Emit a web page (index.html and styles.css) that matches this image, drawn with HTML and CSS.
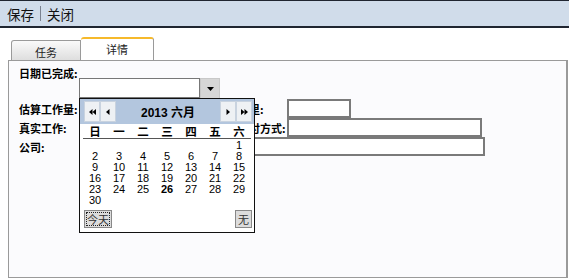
FILE: index.html
```html
<!DOCTYPE html>
<html lang="zh-CN">
<head>
  <meta charset="UTF-8">
  <title>详情</title>
  <link rel="stylesheet" href="styles.css">
</head>
<body>
  <div class="toolbar">
    <span class="tool">保存</span>
    <span class="sep"></span>
    <span class="tool">关闭</span>
  </div>

  <div class="tabs">
    <div class="tab">任务</div>
    <div class="tab active">详情</div>
  </div>

  <div class="panel">
    <div class="label">日期已完成:</div>
    <div class="date-field">
      <div class="date-input"></div>
      <div class="drop-btn">
        <svg width="7" height="4" viewBox="0 0 7 4"><path d="M0 0h7L3.5 4z" fill="#000"/></svg>
      </div>
    </div>

    <div class="form-grid">
      <div class="label">估算工作量:</div>
      <div class="box w-mid"></div>
      <div class="label">公里:</div>
      <div class="box w-small"></div>

      <div class="label">真实工作:</div>
      <div class="box w-mid"></div>
      <div class="label">支付方式:</div>
      <div class="box w-wide"></div>

      <div class="label">公司:</div>
      <div class="box w-full"></div>
    </div>

    <!-- date picker popup -->
    <div class="calendar">
      <div class="cal-head">
        <div class="nav-group">
          <span class="nav-btn"><svg width="7" height="6" viewBox="0 0 7 6"><path d="M3.5 0v6L0 3zM7 0v6L3.5 3z" fill="#000"/></svg></span>
          <span class="nav-btn"><svg width="4" height="6" viewBox="0 0 4 6"><path d="M3.5 0v6L0 3z" fill="#000"/></svg></span>
        </div>
        <div class="cal-title">2013 六月</div>
        <div class="nav-group">
          <span class="nav-btn"><svg width="4" height="6" viewBox="0 0 4 6"><path d="M0.5 0v6L4 3z" fill="#000"/></svg></span>
          <span class="nav-btn"><svg width="7" height="6" viewBox="0 0 7 6"><path d="M0 0v6L3.5 3zM3.5 0v6L7 3z" fill="#000"/></svg></span>
        </div>
      </div>
      <div class="week-row">
        <span>日</span><span>一</span><span>二</span><span>三</span><span>四</span><span>五</span><span>六</span>
      </div>
      <div class="days">
        <span></span><span></span><span></span><span></span><span></span><span></span><span>1</span>
        <span>2</span><span>3</span><span>4</span><span>5</span><span>6</span><span>7</span><span>8</span>
        <span>9</span><span>10</span><span>11</span><span>12</span><span>13</span><span>14</span><span>15</span>
        <span>16</span><span>17</span><span>18</span><span>19</span><span>20</span><span>21</span><span>22</span>
        <span>23</span><span>24</span><span>25</span><span class="today">26</span><span>27</span><span>28</span><span>29</span>
        <span>30</span>
      </div>
      <div class="cal-foot">
        <span class="cal-btn focus">今天</span>
        <span class="cal-btn">无</span>
      </div>
    </div>
  </div>
</body>
</html>
```

FILE: styles.css
```css
body {
    margin: 0;
    font-family: "Liberation Sans", "Noto Sans CJK SC", sans-serif;
    color: #000;
    background-color: #fff;
}

.toolbar {
    height: 25px;
    border-top: 1px solid #1f2530;
    border-bottom: 2px solid #1f2530;
    background-color: #d0dcea;
    display: flex;
    align-items: center;
    padding-left: 7px;
    font-family: "Noto Sans CJK SC", sans-serif;
    font-size: 13.5px;
    color: #111;
}

.sep {
    width: 1px;
    height: 15px;
    background-color: #7a8290;
    margin: 0 6px;
}

.tabs {
    display: flex;
    align-items: flex-end;
    height: 23px;
    margin-top: 9px;
    padding-left: 11px;
}

.tab {
    width: 68px;
    height: 19px;
    border: 1px solid #9a9a9a;
    border-bottom: none;
    border-top-left-radius: 3px;
    background: linear-gradient(#fafafa, #dedede);
    font-family: "Noto Sans CJK SC", sans-serif;
    font-size: 11px;
    line-height: 22px;
    text-align: center;
    color: #222;
}

.tab.active {
    width: 72px;
    height: 22px;
    border-left: none;
    border-top: 2px solid #f6b92b;
    border-radius: 3px 3px 0 0;
    background: #fff;
    line-height: 20px;
    position: relative;
    top: 1px;
}

.panel {
    position: relative;
    margin-left: 8px;
    margin-right: 1px;
    border: 1px solid #9a9a9a;
    border-right-width: 2px;
    background-color: #fbfbfd;
    padding: 6px 0 0 10px;
    box-sizing: border-box;
    height: 218px;
}

.label {
    font-family: "Noto Sans CJK SC", sans-serif;
    font-size: 11px;
    font-weight: bold;
    line-height: 12px;
    white-space: nowrap;
}

.date-field {
    display: flex;
    margin: -1px 0 0 60px;
    height: 21px;
}

.date-input {
    width: 119px;
    height: 18px;
    border: 1px solid #777;
    background-color: #fff;
}

.drop-btn {
    width: 18px;
    height: 20px;
    border: 1px solid #c8c8c8;
    background-color: #d6d6d6;
    display: flex;
    align-items: center;
    justify-content: center;
}

.form-grid {
    display: grid;
    grid-template-columns: 61px 158px 49px 1fr;
    grid-auto-rows: 19px;
    align-items: center;
}

.box {
    height: 15px;
    border: 2px solid #7a7a7a;
    background-color: #fff;
}

.w-mid { width: 140px; }
.w-small { width: 60px; }
.w-wide { width: 191px; }
.w-full {
    grid-column: 2 / 5;
    width: 401px;
}

/* popup calendar */
.calendar {
    position: absolute;
    left: 70px;
    top: 37px;
    width: 174px;
    height: 133px;
    border: 1px solid #111;
    background-color: #fff;
}

.cal-head {
    height: 25px;
    background-color: #b3c6de;
    display: flex;
    align-items: center;
    justify-content: space-between;
    padding: 0 2px 0 4px;
}

.nav-group {
    display: flex;
}

.nav-btn {
    width: 14px;
    height: 19px;
    border: 1px solid #c9d3df;
    background-color: #eef1f4;
    display: flex;
    align-items: center;
    justify-content: center;
}

.cal-title {
    font-family: "Liberation Sans", "Noto Sans CJK SC", sans-serif;
    font-size: 12px;
    font-weight: bold;
}

.week-row,
.days {
    display: grid;
    grid-template-columns: repeat(7, 24px);
    margin: 0 3px;
    text-align: center;
}

.week-row {
    height: 14px;
    border-bottom: 1px solid #555;
    font-family: "Noto Sans CJK SC", sans-serif;
    font-size: 11.5px;
    font-weight: bold;
    line-height: 14px;
}

.days {
    margin-top: 1px;
    grid-auto-rows: 11px;
    font-size: 11px;
    line-height: 11px;
}

.days .today {
    font-weight: bold;
}

.cal-foot {
    display: flex;
    justify-content: space-between;
    padding: 0 2px 0 4px;
    margin-top: 4px;
}

.cal-btn {
    height: 16px;
    padding: 0 2px;
    border: 1px solid #888;
    background-color: #dcdcdc;
    font-family: "Noto Sans CJK SC", sans-serif;
    font-size: 11px;
    line-height: 16px;
    color: #333;
}

.cal-btn.focus {
    outline: 1px dotted #222;
    outline-offset: -3px;
}
```
